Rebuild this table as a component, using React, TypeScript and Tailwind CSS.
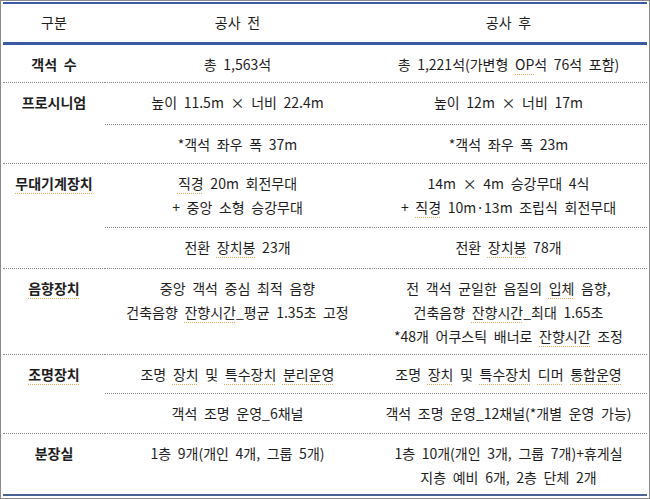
const U = ({ children }: { children: React.ReactNode }) => (
  <span className="underline decoration-dotted decoration-[#dcb060] decoration-1 underline-offset-[4px]">
    {children}
  </span>
);

const line = "border-b border-dotted border-[#8c8c8c]";
const cell = "align-top text-center pt-[7px] leading-[24px]";

export default function App() {
  return (
    <div
      className="w-[650px] h-[499px] bg-white border border-[#8a8a8a] pt-[1px] pl-[2px] text-[14px] text-[#1e1e1e] overflow-hidden [word-spacing:3.5px]"
      style={{ fontFamily: '"Noto Sans CJK KR", "Noto Sans", sans-serif' }}
    >
      <table className="table-fixed border-collapse w-[644px]">
        <colgroup>
          <col className="w-[102px]" />
          <col className="w-[265px]" />
          <col className="w-[277px]" />
        </colgroup>
        <thead>
          <tr className="border-t-2 border-b-[3px] border-[#3b5aa6] h-[40px]">
            <th className="font-normal text-center">구분</th>
            <th className="font-normal text-center">공사 전</th>
            <th className="font-normal text-center">공사 후</th>
          </tr>
        </thead>
        <tbody>
          <tr className={`h-[39px] ${line}`}>
            <td className={`${cell} font-bold pt-[5px]`}>객석 수</td>
            <td className={`${cell} pt-[5px]`}>총 1,563석</td>
            <td className={`${cell} pt-[5px]`}>
              총 1,221석(가변형 <U>OP</U>석 76석 포함)
            </td>
          </tr>

          <tr className={`h-[42px] ${line}`}>
            <td rowSpan={2} className={`${cell} font-bold ${line}`}>프로시니엄</td>
            <td className={cell}>높이 11.5m × 너비 22.4m</td>
            <td className={cell}>높이 12m × 너비 17m</td>
          </tr>
          <tr className={`h-[39px] ${line}`}>
            <td className={cell}>*객석 좌우 폭 37m</td>
            <td className={cell}>*객석 좌우 폭 23m</td>
          </tr>

          <tr className={`h-[64px] ${line}`}>
            <td rowSpan={2} className={`${cell} font-bold ${line}`}>
              <U>무대기계장치</U>
            </td>
            <td className={cell}>
              <U>직경</U> 20m 회전무대
              <br />+ 중앙 소형 승강무대
            </td>
            <td className={cell}>
              14m × 4m 승강무대 4식
              <br />+ <U>직경</U> 10m·13m 조립식 회전무대
            </td>
          </tr>
          <tr className={`h-[41px] ${line}`}>
            <td className={cell}>
              전환 <U>장치봉</U> 23개
            </td>
            <td className={cell}>
              전환 <U>장치봉</U> 78개
            </td>
          </tr>

          <tr className={`h-[86px] ${line}`}>
            <td className={`${cell} font-bold pt-[5px]`}>
              <U>음향장치</U>
            </td>
            <td className={`${cell} pt-[5px]`}>
              중앙 객석 중심 최적 음향
              <br />
              건축음향 <U>잔향시간</U>_평균 1.35초 고정
            </td>
            <td className={`${cell} pt-[5px]`}>
              전 객석 균일한 음질의 <U>입체</U> 음향,
              <br />
              건축음향 <U>잔향시간</U>_최대 1.65초
              <br />
              *48개 어쿠스틱 배너로 <U>잔향시간</U> 조정
            </td>
          </tr>

          <tr className={`h-[39px] ${line}`}>
            <td rowSpan={2} className={`${cell} font-bold ${line}`}>
              <U>조명장치</U>
            </td>
            <td className={cell}>
              조명 <U>장치</U> 및 <U>특수장치</U> <U>분리운영</U>
            </td>
            <td className={cell}>
              조명 <U>장치</U> 및 <U>특수장치</U> <U>디머</U> <U>통합운영</U>
            </td>
          </tr>
          <tr className={`h-[40px] ${line}`}>
            <td className={cell}>객석 조명 운영_6채널</td>
            <td className={cell}>객석 조명 운영_12채널(*개별 운영 가능)</td>
          </tr>

          <tr className="h-[62px] border-b-2 border-[#4a6296]">
            <td className={`${cell} font-bold`}>분장실</td>
            <td className={cell}>1층 9개(개인 4개, 그룹 5개)</td>
            <td className={cell}>
              1층 10개(개인 3개, 그룹 7개)+휴게실
              <br />
              지층 예비 6개, 2층 단체 2개
            </td>
          </tr>
        </tbody>
      </table>
    </div>
  );
}
